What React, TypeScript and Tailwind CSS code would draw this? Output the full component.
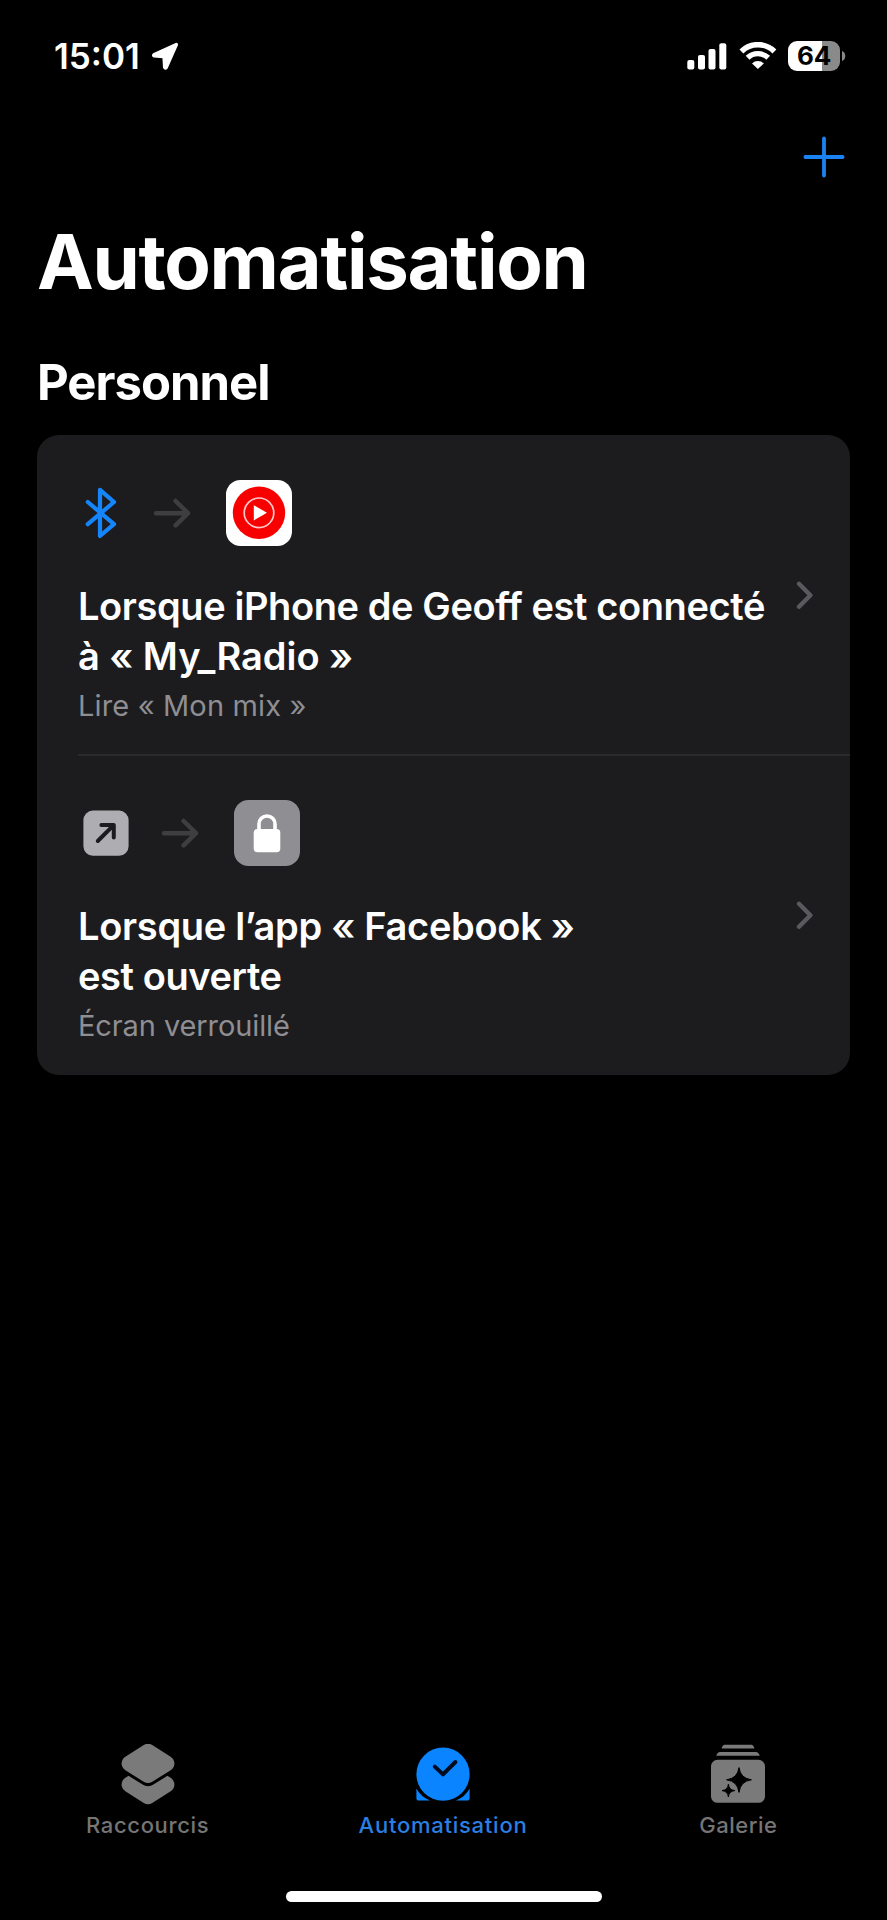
import { ReactNode } from 'react';

interface Automation {
	id: number;
	trigger: ReactNode;
	action: ReactNode;
	title: string[];
	subtitle: string;
	titleClass: string[];
	subtitleClass: string;
}

interface Tab {
	label: string;
	icon: ReactNode;
	active?: boolean;
	labelClass: string;
}

function LocationIcon() {
	return (
		<svg width="28" height="30" viewBox="0 0 28 30" fill="#fff">
			<path
				d="M25 2.8 L2.4 13 Q0.8 14.8 3 15.8 L12.2 16.4 L12.8 26.6 Q14.2 29 16 27 L26.2 4 Q26.4 2.2 25 2.8Z"
				stroke="#fff"
				strokeWidth="1.6"
				strokeLinejoin="round"
			/>
		</svg>
	);
}

function SignalIcon() {
	return (
		<svg width="40" height="27" viewBox="0 0 40 27" fill="#fff">
			<rect x="0.3" y="17" width="7" height="9.4" rx="2" />
			<rect x="11" y="12" width="7" height="14.4" rx="2" />
			<rect x="21.5" y="6" width="7" height="20.4" rx="2" />
			<rect x="32.3" y="0.3" width="7" height="26.1" rx="2" />
		</svg>
	);
}

function WifiIcon() {
	return (
		<svg width="38" height="28" viewBox="0 0 38 28" fill="none">
			<path
				d="M2.4 9.4 A23.6 23.6 0 0 1 35.4 9.4"
				stroke="#fff"
				strokeWidth="5.6"
			/>
			<path
				d="M8.6 15.8 A14.8 14.8 0 0 1 29.2 15.8"
				stroke="#fff"
				strokeWidth="5.4"
			/>
			<path
				d="M18.9 27 L13 21.4 A8.4 8.4 0 0 1 24.8 21.4Z"
				fill="#fff"
			/>
		</svg>
	);
}

function Battery() {
	return (
		<div className="flex items-center">
			<div className="flex h-[30px] w-[52px] items-center justify-center rounded-[9px] bg-[linear-gradient(to_right,#fff_65%,#8a8a8a_65%)] text-[26px] leading-none font-bold tracking-[-0.3px] text-black">
				64
			</div>
			<svg
				className="ml-[2px]"
				width="4"
				height="10"
				viewBox="0 0 4 10"
				fill="#8a8a8a"
			>
				<path d="M0 0 A4.4 5.2 0 0 1 0 10Z" />
			</svg>
		</div>
	);
}

function BluetoothIcon() {
	return (
		<svg
			className="mr-[1px] ml-[7px]"
			width="32"
			height="54"
			viewBox="0 0 32 54"
			fill="none"
			stroke="#1585fb"
			strokeWidth="4.2"
			strokeLinecap="round"
			strokeLinejoin="round"
		>
			<path d="M2.8 16 L29 38.2 L15 50 V3.8 L29 16 L2.8 38.2" />
		</svg>
	);
}

function ArrowIcon() {
	return (
		<svg
			width="38"
			height="32"
			viewBox="0 0 38 32"
			fill="none"
			stroke="#3e3e40"
			strokeWidth="4.5"
			strokeLinecap="round"
			strokeLinejoin="round"
		>
			<path d="M3 16.2 H35 M22.6 4 L35 16.2 L22.6 28.4" />
		</svg>
	);
}

function YoutubeMusicIcon() {
	return (
		<svg width="66" height="66" viewBox="0 0 66 66">
			<rect width="66" height="66" rx="14.5" fill="#fff" />
			<circle cx="33" cy="32.8" r="26.2" fill="#f80000" />
			<circle
				cx="33"
				cy="32.8"
				r="14.8"
				fill="none"
				stroke="#ffc9c9"
				strokeWidth="1.7"
			/>
			<path d="M27.8 25.2 L41 32.8 L27.8 40.4Z" fill="#fff" />
		</svg>
	);
}

function OpenAppIcon() {
	return (
		<svg
			className="-mr-[3px] ml-[5px]"
			width="46"
			height="46"
			viewBox="0 0 46 46"
		>
			<rect
				x="0.4"
				y="0.6"
				width="45.2"
				height="45.2"
				rx="9.5"
				fill="#aeaeb2"
			/>
			<path
				d="M14.8 31 L30.4 15.4 M18.4 15 H30.8 V27.6"
				fill="none"
				stroke="#1c1c1e"
				strokeWidth="4"
				strokeLinecap="round"
				strokeLinejoin="round"
			/>
		</svg>
	);
}

function LockIcon() {
	return (
		<svg width="66" height="66" viewBox="0 0 66 66">
			<rect width="66" height="66" rx="14.5" fill="#8e8e93" />
			<rect
				x="19.7"
				y="29"
				width="26.6"
				height="23.2"
				rx="3.6"
				fill="#fff"
			/>
			<path
				d="M25 31 V24 A8 8 0 0 1 41 24 V31"
				fill="none"
				stroke="#fff"
				strokeWidth="3.6"
			/>
		</svg>
	);
}

function ChevronIcon() {
	return (
		<svg
			width="18"
			height="30"
			viewBox="0 0 18 30"
			fill="none"
			stroke="#5a5a5e"
			strokeWidth="4.4"
			strokeLinecap="round"
			strokeLinejoin="round"
		>
			<path d="M3 3.8 L14.4 15.3 L3 26.8" />
		</svg>
	);
}

function ShortcutsIcon() {
	return (
		<svg
			width="54"
			height="62"
			viewBox="0 0 54 62"
			strokeLinejoin="round"
		>
			<path
				d="M27 29 L45.4 40.6 L27 52.2 L8.6 40.6Z"
				fill="#7a7a7a"
				stroke="#7a7a7a"
				strokeWidth="16"
			/>
			{/* wider outline cuts the gap between the two layers */}
			<path
				d="M27 7.8 L45.4 19.4 L27 31 L8.6 19.4Z"
				stroke="#000"
				strokeWidth="22"
			/>
			<path
				d="M27 7.8 L45.4 19.4 L27 31 L8.6 19.4Z"
				fill="#7a7a7a"
				stroke="#7a7a7a"
				strokeWidth="16"
			/>
		</svg>
	);
}

function ClockIcon() {
	return (
		<svg width="54" height="62" viewBox="0 0 54 62">
			<path
				d="M0.4 44.5 Q4.6 52.6 14 56.6 H3 Q0.4 56.6 0.4 54Z M53.6 44.5 Q49.4 52.6 40 56.6 H51 Q53.6 56.6 53.6 54Z"
				fill="#0a84ff"
			/>
			<circle cx="27" cy="30.2" r="26.6" fill="#0a84ff" />
			<path
				d="M18.8 22.6 L27 30.4 L39.4 18"
				fill="none"
				stroke="#000c1e"
				strokeWidth="4"
				strokeLinecap="round"
				strokeLinejoin="round"
			/>
		</svg>
	);
}

function GalleryIcon() {
	return (
		<svg width="54" height="62" viewBox="0 0 54 62" fill="#7a7a7a">
			<path d="M13.6 0.8 H40.4 Q42.4 0.8 43.4 4.4 H10.6 Q11.6 0.8 13.6 0.8Z" />
			<path d="M9 8 H45 Q47.6 8 48.8 11.8 H5.2 Q6.4 8 9 8Z" />
			<rect y="15.8" width="54" height="43" rx="6.5" />
			<path
				d="M28 23.6 Q29.4 34.4 40.4 35.8 Q29.4 37.2 28 48.4 Q26.6 37.2 15.6 35.8 Q26.6 34.4 28 23.6Z"
				fill="#000"
				stroke="#000"
			/>
			<path
				d="M17.4 40.2 Q18 46 23.8 46.6 Q18 47.2 17.4 53 Q16.8 47.2 11 46.6 Q16.8 46 17.4 40.2Z"
				fill="#000"
				stroke="#000"
			/>
		</svg>
	);
}

const automations: Automation[] = [
	{
		id: 1,
		trigger: <BluetoothIcon />,
		action: <YoutubeMusicIcon />,
		title: [
			'Lorsque iPhone de Geoff est connecté',
			'à «\u00a0My_Radio\u00a0»'
		],
		subtitle: 'Lire «\u00a0Mon mix\u00a0»',
		titleClass: ['tracking-[-0.4px]', 'tracking-[-0.05px]'],
		subtitleClass: 'tracking-[0.15px]'
	},
	{
		id: 2,
		trigger: <OpenAppIcon />,
		action: <LockIcon />,
		title: ['Lorsque l’app «\u00a0Facebook\u00a0»', 'est ouverte'],
		subtitle: 'Écran verrouillé',
		titleClass: ['tracking-[-0.3px]', 'tracking-[-0.4px]'],
		subtitleClass: 'tracking-[-0.1px]'
	}
];

const tabs: Tab[] = [
	{
		label: 'Raccourcis',
		icon: <ShortcutsIcon />,
		labelClass: 'tracking-[0.65px]'
	},
	{
		label: 'Automatisation',
		icon: <ClockIcon />,
		active: true,
		labelClass: 'tracking-[0.75px]'
	},
	{
		label: 'Galerie',
		icon: <GalleryIcon />,
		labelClass: 'tracking-[0.5px]'
	}
];

function StatusBar() {
	return (
		<div className="flex h-[112px] items-center justify-between pr-[41px] pl-[54px]">
			<div className="flex items-center">
				<span className="w-[97px] text-[35px] leading-[40px] font-semibold text-white">
					15:01
				</span>
				<LocationIcon />
			</div>
			<div className="flex items-center">
				<SignalIcon />
				<div className="mr-[11px] ml-[12px]">
					<WifiIcon />
				</div>
				<Battery />
			</div>
		</div>
	);
}

function AutomationRow({ item }: { item: Automation }) {
	return (
		<div className="flex h-[320px] items-center pr-[36px] pl-[41px]">
			<div className="h-[230px] flex-1">
				<div className="flex h-[66px] items-center gap-[35px]">
					{item.trigger}
					<ArrowIcon />
					{item.action}
				</div>
				<h3 className="mt-[35px] text-[38px] leading-[50px] font-semibold whitespace-nowrap text-white">
					{item.title.map((line, index) => (
						<span
							key={line}
							className={`block ${item.titleClass[index]}`}
						>
							{line}
						</span>
					))}
				</h3>
				<p
					className={`mt-[6px] text-[29px] leading-[38px] text-[#8e8e93] ${item.subtitleClass}`}
				>
					{item.subtitle}
				</p>
			</div>
			<ChevronIcon />
		</div>
	);
}

function TabBar() {
	return (
		<nav className="grid grid-cols-3 pr-[1px]">
			{tabs.map((tab) => (
				<div
					key={tab.label}
					className={`flex flex-col items-center ${
						tab.active
							? 'text-[#2a7fe0]'
							: 'text-[#757575]'
					}`}
				>
					{tab.icon}
					<span
						className={`mt-[5px] text-[22px] leading-[28px] font-medium ${tab.labelClass}`}
					>
						{tab.label}
					</span>
				</div>
			))}
		</nav>
	);
}

export default function App() {
	return (
		<div className="flex h-[1920px] w-[887px] flex-col bg-black font-['Inter',sans-serif]">
			<StatusBar />
			<div className="flex h-[90px] items-center justify-end pr-[42px]">
				<svg
					width="42"
					height="42"
					viewBox="0 0 42 42"
					stroke="#1b82f2"
					strokeWidth="3.8"
					strokeLinecap="round"
				>
					<path d="M21 2.4 V39.6 M2.4 21 H39.6" />
				</svg>
			</div>
			<main className="flex-1 px-[37px]">
				<h1 className="mt-[19px] text-[76px] leading-[80px] font-bold tracking-[-1.3px] text-white">
					Automatisation
				</h1>
				<h2 className="mt-[52px] text-[49px] leading-[60px] font-bold tracking-[-1px] text-white">
					Personnel
				</h2>
				<section className="mt-[22px] h-[640px] rounded-[22px] bg-[#1c1c1e]">
					<AutomationRow item={automations[0]} />
					<div className="-mt-[1px] -mb-[1px] ml-[41px] h-[2px] bg-[#2a2a2c]" />
					<AutomationRow item={automations[1]} />
				</section>
			</main>
			<TabBar />
			<div className="mt-[52px] mb-[18px] h-[11px] w-[316px] self-center rounded-full bg-white" />
		</div>
	);
}
